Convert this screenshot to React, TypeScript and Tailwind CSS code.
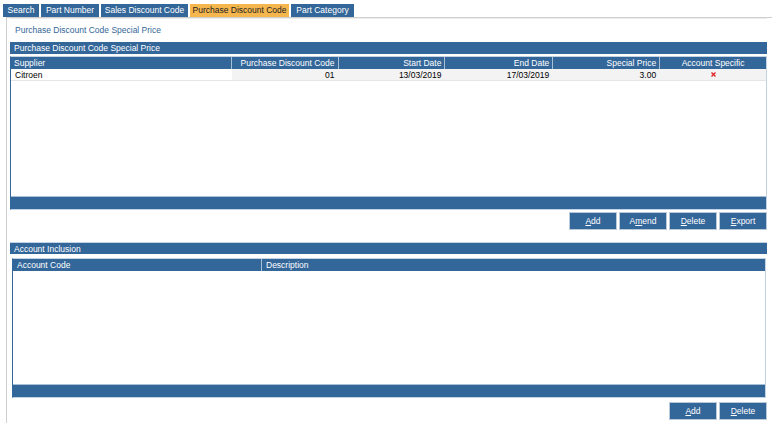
const tabs = [
  { label: 'Search', w: 36 },
  { label: 'Part Number', w: 58 },
  { label: 'Sales Discount Code', w: 87 },
  { label: 'Purchase Discount Code', w: 99, active: true },
  { label: 'Part Category', w: 63 },
]

const cols = [
  { label: 'Supplier', w: 221, align: 'text-left' },
  { label: 'Purchase Discount Code', w: 107, align: 'text-right' },
  { label: 'Start Date', w: 107, align: 'text-right' },
  { label: 'End Date', w: 108, align: 'text-right' },
  { label: 'Special Price', w: 107, align: 'text-right' },
  { label: 'Account Specific', w: 106, align: 'text-center' },
]

const Btn = ({ pre, u, post }: { pre?: string; u: string; post: string }) => (
  <button className="w-[46px] h-[16px] bg-[#336699] text-white outline outline-1 outline-[#b9c9da] text-[8.5px] leading-[16px]">
    {pre}
    <span className="underline">{u}</span>
    {post}
  </button>
)

const App = () => {
  return (
    <div
      className="w-[772px] h-[427px] bg-white overflow-hidden text-[8.5px] text-black whitespace-nowrap"
      style={{ fontFamily: '"Liberation Sans", Arial, sans-serif' }}
    >
      {/* Tabs */}
      <div className="flex gap-[2px] pl-[3px] pt-[4px]">
        {tabs.map((t) => (
          <div
            key={t.label}
            style={{ width: t.w }}
            className={
              'h-[13px] leading-[13px] text-center overflow-hidden ' +
              (t.active ? 'bg-[#f6b64e] text-[#222]' : 'bg-[#336699] text-white')
            }
          >
            {t.label}
          </div>
        ))}
      </div>

      {/* Content panel */}
      <div className="pl-[6px]">
        <div className="border-l border-t border-[#cfcfcf] h-[406px] pl-[3px] pr-[5px]">
          <div className="border-t border-[#ececec] h-[24px] pl-[5px] pt-[5px] text-[#336699]">
            Purchase Discount Code Special Price
          </div>

          <div className="h-[12px] leading-[12px] bg-[#336699] text-white pl-[4px]">
            Purchase Discount Code Special Price
          </div>

          <div className="mt-[2px] h-[154px] flex flex-col border border-[#c3d3e3] border-l-[#336699]">
            <div className="flex h-[12px] bg-[#336699] text-white">
              {cols.map((c, i) => (
                <div
                  key={c.label}
                  style={{ width: c.w }}
                  className={
                    c.align +
                    ' leading-[12px] px-[3px] overflow-hidden ' +
                    (i < cols.length - 1 ? 'border-r border-[#a9bfd6]' : '')
                  }
                >
                  {c.label}
                </div>
              ))}
            </div>
            <div className="flex h-[12px] border-b border-[#e6e6e6]">
              <div className="w-[221px] pl-[4px] leading-[12px]">Citroen</div>
              <div className="w-[107px] bg-[#f3f3f3] text-right pr-[4px] leading-[12px]">01</div>
              <div className="w-[107px] bg-[#f3f3f3] text-right pr-[4px] leading-[12px]">13/03/2019</div>
              <div className="w-[108px] bg-[#f3f3f3] text-right pr-[4px] leading-[12px]">17/03/2019</div>
              <div className="w-[107px] bg-[#f3f3f3] text-right pr-[4px] leading-[12px]">3.00</div>
              <div className="w-[106px] bg-[#f3f3f3] flex items-center justify-center">
                <svg width="5" height="5" viewBox="0 0 5 5">
                  <path d="M0.5 0.5L4.5 4.5M4.5 0.5L0.5 4.5" stroke="#e02020" strokeWidth="1.3" />
                </svg>
              </div>
            </div>
            <div className="flex-1" />
            <div className="h-[13px] bg-[#336699] border-t border-[#a9bfd6]" />
          </div>

          <div className="flex justify-end gap-[4px] mt-[3px] pr-[1px]">
            <Btn u="A" post="dd" />
            <Btn pre="A" u="m" post="end" />
            <Btn u="D" post="elete" />
            <Btn u="E" post="xport" />
          </div>

          <div className="mt-[13px] h-[12px] leading-[12px] bg-[#336699] text-white pl-[4px] border-t border-[#c3d3e3]">
            Account Inclusion
          </div>

          <div className="ml-[2px] mr-[1px] mt-[4px] h-[140px] flex flex-col border border-[#c3d3e3] border-l-[#336699]">
            <div className="flex h-[12px] bg-[#336699] text-white">
              <div className="w-[249px] pl-[4px] leading-[12px] border-r border-[#a9bfd6]">Account Code</div>
              <div className="flex-1 pl-[4px] leading-[12px]">Description</div>
            </div>
            <div className="flex-1" />
            <div className="h-[13px] bg-[#336699] border-t border-[#a9bfd6]" />
          </div>

          <div className="flex justify-end gap-[4px] mt-[5px] pr-[1px]">
            <Btn u="A" post="dd" />
            <Btn u="D" post="elete" />
          </div>
        </div>
      </div>
    </div>
  )
}

export default App
